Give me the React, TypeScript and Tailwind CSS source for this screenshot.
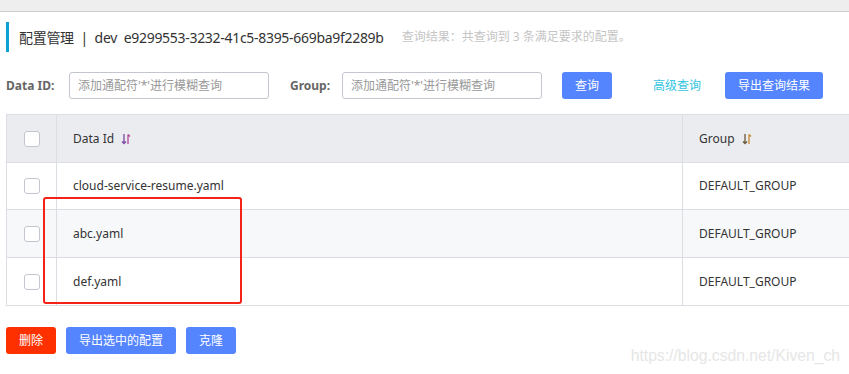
import React from "react";

const rows = [
  { id: "cloud-service-resume.yaml", group: "DEFAULT_GROUP", h: "h-[47px]" },
  { id: "abc.yaml", group: "DEFAULT_GROUP", h: "h-[48px]" },
  { id: "def.yaml", group: "DEFAULT_GROUP", h: "h-[48px]" },
];

function SortIcon({ down, up }: { down: string; up: string }) {
  return (
    <svg width="10" height="12" viewBox="0 0 10 12" className="ml-[7px] inline-block">
      <path d="M3 1 V10.5 M1 8.5 L3 10.5 L5 8.5" fill="none" stroke={down} strokeWidth="1.3" />
      <path d="M7 11 V1.5 M7 1.5 L9 3.5" fill="none" stroke={up} strokeWidth="1.3" />
    </svg>
  );
}

function Checkbox() {
  return <span className="block h-4 w-4 rounded-[3px] border border-[#c4c6cf] bg-white" />;
}

export default function App() {
  const font = { fontFamily: '"Noto Sans", "Noto Sans CJK SC", sans-serif' };

  return (
    <div className="relative h-[374px] w-[849px] overflow-hidden bg-white text-[#333]" style={font}>
      <div className="h-[12px] border-b border-[#d0d0d0] bg-[#eeeeee]" />

      <div className="pl-[6px]">
        {/* title */}
        <div className="mt-[10px] flex h-[30px] items-center border-l-[3px] border-[#09a2d1] pl-[10px]">
          <span className="text-[14px] tracking-[-0.3px] text-[#333]">
            配置管理 &nbsp;|&nbsp; dev&nbsp; e9299553-3232-41c5-8395-669ba9f2289b
          </span>
          <span className="ml-[18px] text-[12px] text-[#c5c5c5]">查询结果：共查询到 3 条满足要求的配置。</span>
        </div>

        {/* search */}
        <div className="mt-[20px] flex h-[27px] items-center text-[12px]">
          <span className="w-[63px] font-bold text-[#666]">Data ID:</span>
          <div className="flex h-[27px] w-[200px] items-center rounded-[3px] border border-[#c4c6cf] px-[8px] text-[#999]">
            添加通配符'*'进行模糊查询
          </div>
          <span className="ml-[21px] w-[52px] font-bold text-[#666]">Group:</span>
          <div className="flex h-[27px] w-[200px] items-center rounded-[3px] border border-[#c4c6cf] px-[8px] text-[#999]">
            添加通配符'*'进行模糊查询
          </div>
          <button className="ml-[20px] h-[27px] w-[50px] rounded-[3px] bg-[#5584ff] text-white">查询</button>
          <span className="ml-[41px] text-[#33c4e0]">高级查询</span>
          <button className="ml-[24px] h-[27px] w-[98px] rounded-[3px] bg-[#5584ff] text-white">导出查询结果</button>
        </div>

        {/* table */}
        <div className="mt-[15px] w-[860px] border-l border-t border-[#dcdee3] text-[12px]">
          <div className="flex h-[48px] border-b border-[#dcdee3] bg-[#ebecf0]">
            <div className="flex w-[50px] items-center justify-center border-r border-[#dcdee3] pl-[1px]">
              <Checkbox />
            </div>
            <div className="flex w-[626px] items-center border-r border-[#dcdee3] pl-[16px]">
              Data Id
              <SortIcon down="#7b4aa6" up="#b04a9a" />
            </div>
            <div className="flex flex-1 items-center pl-[16px]">
              Group
              <SortIcon down="#6a5a3a" up="#c8892e" />
            </div>
          </div>
          {rows.map((r, i) => (
            <div
              key={r.id}
              className={`flex ${r.h} border-b border-[#dcdee3] ${i === 1 ? "bg-[#f7f8fa]" : "bg-white"}`}
            >
              <div className="flex w-[50px] items-center justify-center border-r border-[#dcdee3] pl-[1px]">
                <Checkbox />
              </div>
              <div className="flex w-[626px] items-center border-r border-[#dcdee3] pl-[16px]">{r.id}</div>
              <div className="flex flex-1 items-center pl-[16px]">{r.group}</div>
            </div>
          ))}
        </div>

        {/* bottom actions */}
        <div className="mt-[21px] flex gap-[10px] text-[12px] text-white">
          <button className="h-[27px] w-[50px] rounded-[3px] bg-[#ff3000]">删除</button>
          <button className="h-[27px] w-[110px] rounded-[3px] bg-[#5584ff]">导出选中的配置</button>
          <button className="h-[27px] w-[50px] rounded-[3px] bg-[#5584ff]">克隆</button>
        </div>
      </div>

      {/* annotation overlay */}
      <div className="absolute left-[43px] top-[197px] h-[107px] w-[199px] rounded-[3px] border-2 border-[#f52218]" />

      {/* watermark */}
      <div
        className="absolute right-[9px] top-[344px] text-[15.7px] text-[#e6e6e6]"
        style={{ fontFamily: '"Liberation Sans", Arial, sans-serif' }}
      >
        https://blog.csdn.net/Kiven_ch
      </div>
    </div>
  );
}
